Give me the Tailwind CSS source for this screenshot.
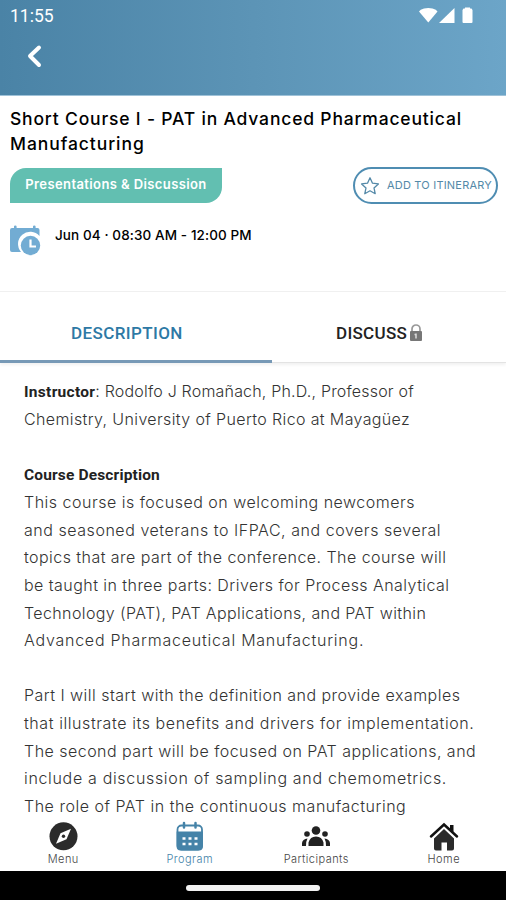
<!DOCTYPE html>
<html lang="en">
<head>
    <meta charset="UTF-8">
    <meta name="viewport" content="width=device-width, initial-scale=1.0">
    <title>Short Course I</title>
    <script src="https://cdn.jsdelivr.net/npm/@tailwindcss/browser@4"></script>
</head>
<body class="bg-white">
    <div class="flex flex-col w-[506px] h-[900px] overflow-hidden bg-white text-black font-['Inter',sans-serif]">

        <!-- Header -->
        <header class="h-24 shrink-0 bg-linear-to-r from-[#4a83a6] via-[#5c94b6] to-[#6ca5c8] border-b border-[#9fc2d8] text-white">
            <div class="flex items-center justify-between h-8 pl-[10px] pr-[32px]">
                <span class="text-[17.500px] leading-8 font-['Roboto',sans-serif]">11:55</span>
                <svg class="w-[55px] h-[17px] mb-[2px]" viewBox="0 0 55 17" fill="currentColor">
                    <path d="M0 4.500Q1 2.500 5 1.500Q9.300 .5 13.500 1.500Q17.500 2.500 18.500 4.500L9.300 15.500Z"/>
                    <path d="M35.500 1V16H20Z"/>
                    <path d="M46 .5h5v1h1.500l1 1.500V15q0 1-1 1h-8q-1 0-1-1V3l1-1.500H46Z"/>
                </svg>
            </div>
            <svg class="ml-[26px] mt-3 w-4 h-6" viewBox="0 0 16 24" fill="none" stroke="currentColor" stroke-width="4" stroke-linecap="round" stroke-linejoin="round">
                <path d="M13 3.500L4 12L13 21"/>
            </svg>
        </header>

        <!-- Session info -->
        <section class="h-[196px] shrink-0 px-[10px] pt-[10px] border-b border-[#f0f0f0]">
            <h1 class="text-[17.500px] leading-[25px] font-medium whitespace-nowrap">
                <span class="block w-fit tracking-[0.820px]">Short Course I - PAT in Advanced Pharmaceutical</span>
                <span class="block w-fit tracking-[0.930px]">Manufacturing</span>
            </h1>
            <div class="flex justify-between mt-[12px]">
                <div class="flex justify-center w-[212px] h-[35px] rounded-tl-[16px] rounded-br-[16px] bg-[#62bfb1] text-white text-[13px] leading-[33px] font-semibold tracking-[0.400px] whitespace-nowrap">Presentations &amp; Discussion</div>
                <button class="flex items-center w-[145px] h-[37px] -mt-[1px] -mr-[2px] pl-[5px] rounded-full border-2 border-[#4f8db2] text-[#5489a8] whitespace-nowrap">
                    <svg class="w-5 h-5 shrink-0" viewBox="0 0 20 20" fill="none" stroke="currentColor" stroke-width="1.300" stroke-linejoin="round">
                        <path d="M10 1.800L12.500 7.200L18.400 7.900L14 11.900L15.200 17.700L10 14.800L4.800 17.700L6 11.900L1.600 7.900L7.500 7.200Z"/>
                    </svg>
                    <span class="ml-[7px] pb-[1px] text-[11px] tracking-[0.200px]">ADD TO ITINERARY</span>
                </button>
            </div>
            <div class="flex mt-[20px]">
                <svg class="w-[31px] h-8" viewBox="0 0 31 32" fill="#72acd3">
                    <path d="M2 4H4V2.500q0-1 1.300-1t1.300 1V4H23V2.500q0-1 1.300-1t1.300 1V4H27.500q2 0 2 2V12A12 12 0 0 0 11 28H2Q0 28 0 26V6Q0 4 2 4Z"/>
                    <circle cx="20.500" cy="21.500" r="9.700"/>
                    <path d="M20.500 15.500V22.500H26" fill="none" stroke="#fff" stroke-width="2.200"/>
                </svg>
                <span class="ml-[14px] text-[13.500px] leading-[22px] font-medium tracking-[0.100px] whitespace-nowrap">Jun 04 · 08:30 AM - 12:00 PM</span>
            </div>
        </section>

        <!-- Tabs -->
        <nav class="flex h-[71px] shrink-0 border-b border-[#e3e3e3] shadow-[0_2px_3px_rgba(0,0,0,0.06)] font-['Roboto',sans-serif] text-[17px] leading-[82px] font-medium whitespace-nowrap">
            <a class="w-[272px] h-[71px] pl-[71px] border-b-[3px] border-[#7799b6] text-[#2d79a5] tracking-[0.400px]">DESCRIPTION</a>
            <a class="flex pl-16 text-[#222] tracking-[0.300px]">DISCUSS
                <svg class="mt-[31px] ml-[2px] w-[14px] h-[19px]" viewBox="0 0 14 19">
                    <path d="M3 9V6a4 4 0 0 1 8 0V9" fill="none" stroke="#999" stroke-width="1.700"/>
                    <rect x="1" y="8" width="12" height="10" rx="1" fill="#777"/>
                    <path d="M7 10.500V15.500M5.500 11.500H7" stroke="#ddd" stroke-width="1.500"/>
                </svg>
            </a>
        </nav>

        <!-- Description -->
        <main class="flex-1 min-h-0 overflow-hidden pl-6 pt-[15px] text-[16px] leading-[27.600px] font-light text-[#333] whitespace-nowrap">
            <p>
                <span class="block w-fit h-[27.600px] tracking-[0.190px]"><b class="font-['Roboto',sans-serif] font-bold text-[15.500px] tracking-[0.300px] text-[#222]">Instructor</b>: Rodolfo J Romañach, Ph.D., Professor of</span>
                <span class="block w-fit tracking-[0.370px]">Chemistry, University of Puerto Rico at Mayagüez</span>
            </p>
            <p class="mt-[28.400px]">
                <b class="block w-fit font-['Roboto',sans-serif] font-bold text-[15.500px] tracking-[0.150px] text-[#222]">Course Description</b>
                <span class="block w-fit tracking-[0.500px]">This course is focused on welcoming newcomers</span>
                <span class="block w-fit tracking-[0.540px]">and seasoned veterans to IFPAC, and covers several</span>
                <span class="block w-fit tracking-[0.450px]">topics that are part of the conference. The course will</span>
                <span class="block w-fit tracking-[0.450px]">be taught in three parts: Drivers for Process Analytical</span>
                <span class="block w-fit tracking-[0.390px]">Technology (PAT), PAT Applications, and PAT within</span>
                <span class="block w-fit tracking-[0.760px]">Advanced Pharmaceutical Manufacturing.</span>
            </p>
            <p class="mt-[27.600px]">
                <span class="block w-fit tracking-[0.470px]">Part I will start with the definition and provide examples</span>
                <span class="block w-fit tracking-[0.580px]">that illustrate its benefits and drivers for implementation.</span>
                <span class="block w-fit tracking-[0.470px]">The second part will be focused on PAT applications, and</span>
                <span class="block w-fit tracking-[0.670px]">include a discussion of sampling and chemometrics.</span>
                <span class="block w-fit tracking-[0.510px]">The role of PAT in the continuous manufacturing</span>
            </p>
        </main>

        <!-- Bottom navigation -->
        <nav class="grid grid-cols-4 h-[56px] shrink-0 pt-[6px] bg-white text-[11px] leading-[17px] font-light tracking-[0.450px] text-[#444]">
            <a class="flex flex-col items-center">
                <svg class="w-[30px] h-[30px]" viewBox="0 0 30 30">
                    <circle cx="15.500" cy="15.300" r="14" fill="#2b2b2b"/>
                    <path d="M23 7.800L18.500 18.300L8 22.800L12.500 12.300Z" fill="#fff"/>
                    <circle cx="15.500" cy="15.300" r="1.700" fill="#2b2b2b"/>
                </svg>
                <span>Menu</span>
            </a>
            <a class="flex flex-col items-center text-[#4583a8]">
                <svg class="w-[30px] h-[30px]" viewBox="0 0 30 30">
                    <rect x="2.500" y="4.500" width="24.500" height="24" rx="4" fill="none" stroke="currentColor" stroke-width="1.800"/>
                    <path d="M1.600 10.500H27.900V25.500q0 4-4 4H5.600q-4 0-4-4Z" fill="currentColor"/>
                    <path d="M9 2V6.500M20.500 2V6.500" stroke="currentColor" stroke-width="2.500" stroke-linecap="round"/>
                    <path d="M7.500 17.500h3M13.500 17.500h3M19.500 17.500h3M7.500 23h3M13.500 23h3M19.500 23h3" stroke="#fff" stroke-width="2.600"/>
                </svg>
                <span>Program</span>
            </a>
            <a class="flex flex-col items-center">
                <svg class="w-[30px] h-[30px]" viewBox="0 0 30 30" fill="#222">
                    <circle cx="15" cy="9.500" r="4.300"/>
                    <circle cx="6" cy="13" r="2.800"/>
                    <circle cx="24" cy="13" r="2.800"/>
                    <path d="M7.500 25V21.500Q9 15.500 15 15.500T22.500 21.500V25ZM1 25V22Q1.500 18 6.500 17.500Q5 20 5 25ZM29 25V22Q28.500 18 23.500 17.500Q25 20 25 25Z"/>
                </svg>
                <span>Participants</span>
            </a>
            <a class="flex flex-col items-center pl-[2px]">
                <svg class="w-[30px] h-[30px]" viewBox="0 0 30 30">
                    <path d="M21 4H24.500V11L21 8Z" fill="#111"/>
                    <path d="M2 15.500L15 3.500L28 15.500" fill="none" stroke="#111" stroke-width="2.500" stroke-linecap="round"/>
                    <path d="M15 8L25 17.500V27.500q0 2-2 2H18V21.500H12.500V29.500H7q-2 0-2-2V17.500Z" fill="#2b2b2b"/>
                </svg>
                <span>Home</span>
            </a>
        </nav>

        <!-- System gesture bar -->
        <div class="flex justify-center h-[29px] shrink-0 pt-[14px] bg-black">
            <div class="w-[134px] h-[6px] rounded-full bg-[#f2f2f2]"></div>
        </div>
    </div>
</body>
</html>
